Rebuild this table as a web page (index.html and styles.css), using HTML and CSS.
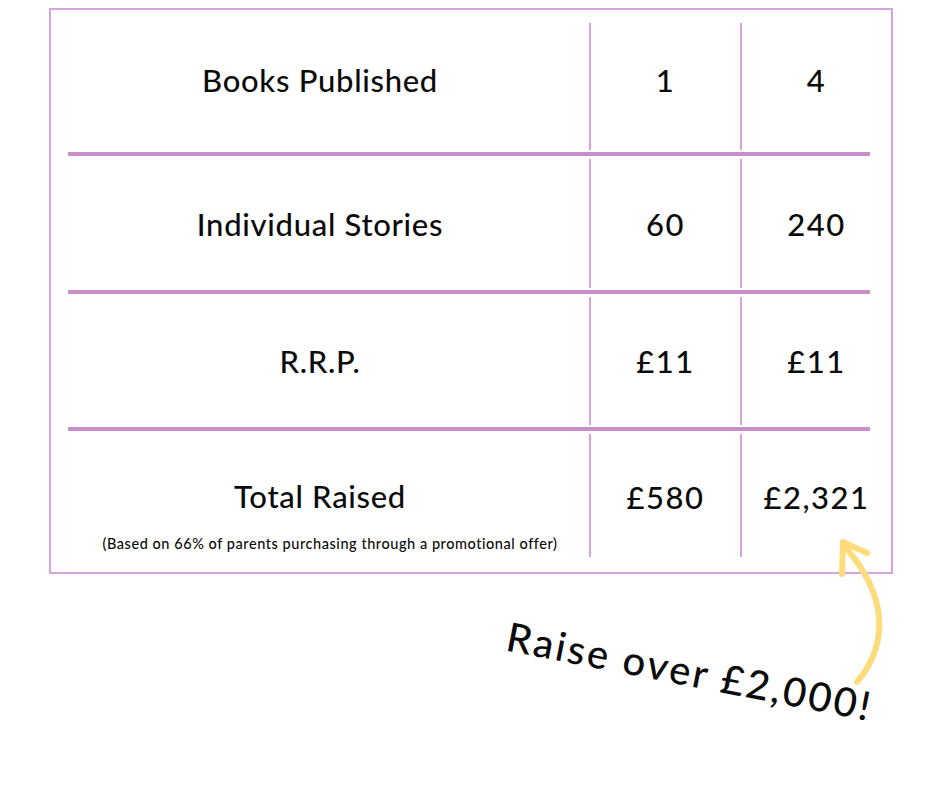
FILE: index.html
```html
<!DOCTYPE html>
<html lang="en">
<head>
<meta charset="utf-8">
<title>Fundraising table</title>
<link rel="stylesheet" href="styles.css">
</head>
<body>
<div class="page">
  <div class="sheet">
    <div class="row r1">
      <div class="cell label">Books Published</div>
      <div class="cell num">1</div>
      <div class="cell num">4</div>
    </div>
    <div class="rule"></div>
    <div class="row r2">
      <div class="cell label">Individual Stories</div>
      <div class="cell num">60</div>
      <div class="cell num">240</div>
    </div>
    <div class="rule"></div>
    <div class="row r3">
      <div class="cell label">R.R.P.</div>
      <div class="cell num">£11</div>
      <div class="cell num">£11</div>
    </div>
    <div class="rule"></div>
    <div class="row r4">
      <div class="cell label">
        <span class="main">Total Raised</span>
        <span class="note">(Based on 66% of parents purchasing through a promotional offer)</span>
      </div>
      <div class="cell num">£580</div>
      <div class="cell num">£2,321</div>
    </div>
  </div>
  <svg class="arrow" width="940" height="788" viewBox="0 0 940 788">
    <path d="M846 548 C 884 592, 892 640, 857 682" fill="none" stroke="#fedb7b" stroke-width="6" stroke-linecap="round"/>
    <path d="M842 574 L843 542 L867 553" fill="none" stroke="#fedb7b" stroke-width="6" stroke-linecap="round" stroke-linejoin="round"/>
  </svg>
  <div class="callout">Raise over £2,000!</div>
</div>
</body>
</html>
```
FILE: styles.css
```css
* { box-sizing: border-box; }
html, body { margin: 0; padding: 0; background: #fff; }
body {
  font-family: "Lato", "Open Sans", sans-serif;
  color: #0b0b0b;
}
.page {
  position: relative;
  width: 940px;
  height: 788px;
  padding: 8px 0 0 49px;
}
.sheet {
  width: 844px;
  height: 566px;
  border: 2px solid #d7a3de;
  padding: 13px 0 0 0;
  display: flex;
  flex-direction: column;
}
.row {
  display: grid;
  grid-template-columns: 538px 151px 151px;
}
.r1 { height: 127px; }
.r2 { height: 129px; margin-top: 3px; }
.r3 { height: 128px; margin-top: 3px; }
.r4 { height: 123px; margin-top: 3px; }
.rule {
  height: 4px;
  width: 802px;
  margin: 2px 0 0 17px;
  background: #c88fcb;
}
.cell {
  display: flex;
  align-items: center;
  justify-content: center;
  font-size: 31px;
  font-weight: 500;
  letter-spacing: 0.7px;
}
.num { border-left: 2px solid #d7a3de; letter-spacing: 1.5px; }
.r1 .cell { padding-bottom: 13px; }
.r4 .label {
  flex-direction: column;
  justify-content: flex-start;
  padding-top: 44px;
}
.r4 .num { align-items: flex-start; padding-top: 44px; }
.main { line-height: 36px; }
.note {
  font-size: 14.5px;
  font-weight: 500;
  letter-spacing: 0.55px;
  margin-top: 21px;
  margin-left: 20px;
}
.arrow {
  position: absolute;
  left: 0;
  top: 0;
}
.callout {
  position: absolute;
  left: 512px;
  top: 612px;
  font-size: 40px;
  font-weight: 500;
  white-space: nowrap;
  transform-origin: left top;
  transform: rotate(11deg);
  letter-spacing: 2.5px;
}
```
